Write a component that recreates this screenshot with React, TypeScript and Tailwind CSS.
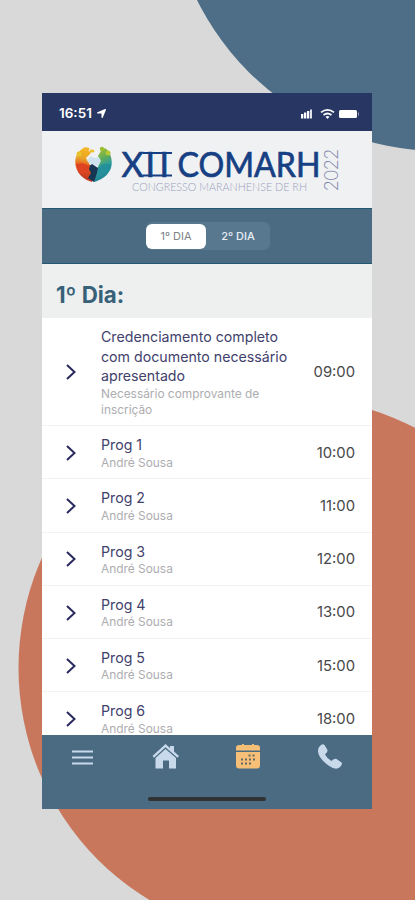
import { FaLocationArrow } from "react-icons/fa6";

const programs = [
  {
    title: "Credenciamento completo com documento necessário apresentado",
    speaker: "Necessário comprovante de inscrição",
    time: "09:00",
  },
  { title: "Prog 1", speaker: "André Sousa", time: "10:00" },
  { title: "Prog 2", speaker: "André Sousa", time: "11:00" },
  { title: "Prog 3", speaker: "André Sousa", time: "12:00" },
  { title: "Prog 4", speaker: "André Sousa", time: "13:00" },
  { title: "Prog 5", speaker: "André Sousa", time: "15:00" },
  { title: "Prog 6", speaker: "André Sousa", time: "18:00" },
];

function Backdrop() {
  return (
    <svg
      className="absolute inset-0"
      width="415"
      height="900"
      viewBox="0 0 415 900"
    >
      <circle cx="440" cy="-120" r="271" fill="#4d6e86" />
      <circle cx="289.500" cy="668" r="271" fill="#c9775c" />
    </svg>
  );
}

function StatusBar() {
  return (
    <div className="flex h-[38px] items-center justify-between bg-[#283664] pt-[3px] pr-[13px] pl-[17px] text-white">
      <div className="flex items-center gap-1">
        <span className="text-[13.500px] font-semibold">16:51</span>
        <FaLocationArrow className="size-[11px]" />
      </div>
      <svg width="58" height="12" viewBox="0 0 58 12" fill="#fff">
        <rect x="0" y="6" width="2.3" height="4.5" />
        <rect x="3" y="4.5" width="2.3" height="6" />
        <rect x="6" y="3" width="2.3" height="7.5" />
        <rect x="9" y="1.5" width="2" height="9" opacity=".85" />
        <g fill="none" stroke="#fff" strokeWidth="1.8">
          <path d="M20 4.4q6.500-5 13 0" />
          <path d="M22.500 7q4-3 8 0" />
        </g>
        <path d="M24.500 8.700q2-1.200 4 0l-2 2.300z" />
        <rect x="38" y="2" width="18" height="8" rx="1.500" />
        <rect x="57" y="4.500" width="1" height="3" opacity=".5" />
      </svg>
    </div>
  );
}

function Logo() {
  return (
    <svg width="330" height="77" viewBox="42 131 330 77">
      <defs>
        <linearGradient id="warm" x1=".6" y1="0" x2=".5" y2="1">
          <stop offset="0" stopColor="#f3b51c" />
          <stop offset=".3" stopColor="#e9a52a" />
          <stop offset=".55" stopColor="#e5531f" />
          <stop offset="1" stopColor="#b93222" />
        </linearGradient>
        <linearGradient id="cool" x1=".3" y1="0" x2=".6" y2="1">
          <stop offset="0" stopColor="#a9c42c" />
          <stop offset=".35" stopColor="#5cab5c" />
          <stop offset=".6" stopColor="#2d9ca3" />
          <stop offset="1" stopColor="#1c7a8c" />
        </linearGradient>
      </defs>
      <path
        d="M82 149C76 153 74 160 76 167C78 175 85 180 92 182L96 171L90 165L86 158L91 153L88 150Z"
        fill="url(#warm)"
      />
      <path
        d="M105 148C111 152 113 161 111 168C108 176 101 180 94 182L92 175L97 169L100 162L98 156L101 151Z"
        fill="url(#cool)"
      />
      <path d="M90 156L95 158L99 157L101 161L98 166L92 165L87 161Z" fill="#cfe3ee" />
      <path d="M88 167L92 164L98 168L97 173L94 182L88 178L91 173Z" fill="#173654" />
      <path d="M76 164L82 163L90 166L88 172L82 174L78 171Z" fill="#df4422" />
      <path d="M98 168L103 164L111 164L110 170L103 175L98 174Z" fill="#24909c" />
      <ellipse cx="86" cy="149" rx="3.500" ry="1.800" fill="#f4b52a" />
      <ellipse cx="92" cy="151" rx="2.500" ry="1.500" fill="#efc02e" />
      <circle cx="102" cy="149" r="2.200" fill="#9dbe2e" />
      <circle cx="79" cy="154" r="2.500" fill="#e7c42c" />
      <circle cx="108" cy="153" r="2.500" fill="#b5c935" />
      <g
        className="font-['Lato'] text-[34px]"
        fill="#173f83"
        stroke="#173f83"
        strokeWidth=".7"
      >
        <text x="121.500 145.500 159.500" y="176.500">
          XII
        </text>
        <text
          x="177.500"
          y="176.500"
          textLength="143"
          lengthAdjust="spacingAndGlyphs"
        >
          COMARH
        </text>
        <path d="M142.500 153h29.500M142.500 175.500h29.500" strokeWidth="2.200" />
      </g>
      <text
        x="132"
        y="190.500"
        textLength="175"
        lengthAdjust="spacingAndGlyphs"
        className="font-['Lato'] text-[11.500px] font-light"
        fill="#9a9fbd"
      >
        CONGRESSO MARANHENSE DE RH
      </text>
      <text
        transform="translate(337.500 191) rotate(-90)"
        textLength="42"
        lengthAdjust="spacingAndGlyphs"
        className="font-['Lato'] text-[19px] font-light"
        fill="#8087ad"
      >
        2022
      </text>
    </svg>
  );
}

function DayTabs() {
  return (
    <div className="flex h-[56px] items-center justify-center border-y border-[#235871] bg-[#4a6b82] pl-[2px]">
      <div className="flex h-[28px] w-[124px] items-center rounded-md bg-[#587890] text-[11px]">
        <button className="h-[25px] w-[60px] rounded-md bg-white text-[#808388]">
          1º DIA
        </button>
        <button className="flex-1 font-medium text-[#e8eef4]">2º DIA</button>
      </div>
    </div>
  );
}

function ProgramRow({
  title,
  speaker,
  time,
}: {
  title: string;
  speaker: string;
  time: string;
}) {
  return (
    <li className="flex items-center border-b border-[#f3f3f5] pt-[9px] pb-[7.700px] pr-[17px] pl-[23px]">
      <svg width="12" height="18" viewBox="0 0 12 18" className="shrink-0">
        <path
          d="M2 2l7.500 7L2 16"
          fill="none"
          stroke="#29295f"
          strokeWidth="2"
        />
      </svg>
      <div className="ml-6 w-[192px]">
        <p className="text-[14.200px] leading-[19.500px] text-[#41416c]">
          {title}
        </p>
        <p className="text-[11.900px] leading-[16px] text-[#adadb0]">
          {speaker}
        </p>
      </div>
      <span className="ml-auto text-[14.800px] text-[#48484a]">{time}</span>
    </li>
  );
}

function TabBar() {
  return (
    <div className="h-[74px] bg-[#4a6b82] pt-[8px]">
      <svg width="330" height="60" viewBox="42 743 330 60" fill="#c9d9ec">
        <path d="M72 750.500h21v2H72zM72 756.500h21v2H72zM72 762.500h21v2H72z" />
        <path d="M165.500 744l4.500 4v-2h4v5.500l5 4.500-1.500 1.800-12-10.500-11.500 10.500-1.500-1.800z" />
        <path d="M155.500 758l10-9 10.500 9v10.500h-7v-8h-6v8h-7.500z" />
        <g fill="#f5bf78">
          <path d="M239 745h3v-1h2v1h8v-1h2v1h3q3 0 3 3v2.500h-24V748q0-3 3-3z" />
          <path d="M236 752h24v13q0 3.500-3 3.500h-18q-3 0-3-3.500z" />
        </g>
        <path
          d="M248.500 755.500h8M241 759.500h15M241 763.500h11"
          stroke="#66675f"
          strokeWidth="2"
          strokeDasharray="2 2"
          fill="none"
        />
        <path d="M319.500 746.500q3-3.500 5-1.500l3 5q.5 2-2.500 4.500 2 4 6.500 6.500 3-3 5-2l5 3.500q1.500 2-2 5-4 3-11-2-11-8-10.500-15 0-2.500 1.500-4z" />
        <rect x="148" y="797" width="118" height="4" rx="2" fill="#303234" />
      </svg>
    </div>
  );
}

export default function App() {
  return (
    <div className="relative h-[900px] w-[415px] overflow-hidden bg-[#d9d9d9] pt-[93px] pl-[42px] font-['Inter',sans-serif]">
      <Backdrop />
      <main className="relative flex h-[716px] w-[330px] flex-col">
        <StatusBar />
        <header className="h-[77px] bg-[#f0f1f2]">
          <Logo />
        </header>
        <DayTabs />
        <h1 className="h-[54px] shrink-0 bg-[#eeefef] pt-[14px] pl-[14px] text-[22.300px] font-bold text-[#376178]">
          1º Dia:
        </h1>
        <ul className="min-h-0 flex-1 overflow-hidden bg-white">
          {programs.map((program) => (
            <ProgramRow key={program.title} {...program} />
          ))}
        </ul>
        <TabBar />
      </main>
    </div>
  );
}
